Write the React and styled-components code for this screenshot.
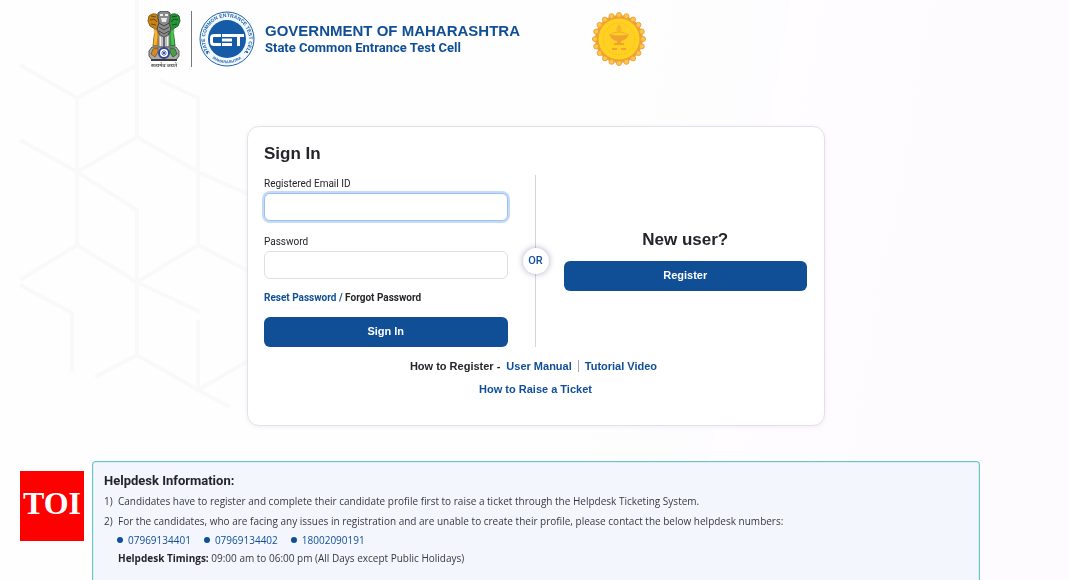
import React from "react";
import styled, { createGlobalStyle } from "styled-components";

const blue = "#104e96";
const ink = "#24252a";
const narrow = `Roboto, "Liberation Sans", sans-serif`;
const wide = `"Liberation Sans", Arial, sans-serif`;
const reading = `"Open Sans", "Liberation Sans", sans-serif`;

const GlobalStyle = createGlobalStyle`
  *, *::before, *::after { box-sizing: border-box; }
  body {
    margin: 0;
    background: #fefefe;
    color: ${ink};
    font-family: ${narrow};
    font-size: 11px;
    line-height: 16px;
  }
`;

const Page = styled.div`
  display: flex;
  flex-direction: column;
  align-items: center;
  min-height: 100vh;
  padding-left: 3px;
  background: linear-gradient(100deg, transparent 55%, #fefbff 80%);
`;

const Backdrop = styled.svg`
  position: fixed;
  inset: 0;
  z-index: -1;
  width: 100%;
  height: 100%;
`;

const Header = styled.header`
  display: flex;
  align-items: center;
  width: 100%;
  max-width: 888px;
  padding: 11px 54px 0;
`;

const EmblemBox = styled.div`
  display: flex;
  height: 56px;
  padding-right: 9px;
  border-right: 1px solid #77777c;
`;

const CetBox = styled.div`
  display: flex;
  margin: 0 10px 0 7px;
`;

const Titles = styled.div`
  color: ${blue};
  font-weight: bold;
`;

const Department = styled.h1`
  margin: 0;
  font-family: ${wide};
  font-size: 15px;
  line-height: 18px;
`;

const Cell = styled.p`
  margin: 0;
  font-size: 13px;
  line-height: 16px;
`;

const SealBox = styled.div`
  display: flex;
  margin-left: 72px;
`;

const Card = styled.main`
  width: calc(100% - 32px);
  max-width: 578px;
  margin: 59px 0 35px;
  padding: 17px 17px 28px 16px;
  border: 1px solid #e5dfea;
  border-radius: 12px;
  background: #fff;
  box-shadow: 0 1px 4px rgba(80, 50, 110, 0.08);
`;

const Heading = styled.h2`
  margin: 0;
  font-family: ${wide};
  font-size: 17px;
  line-height: 20px;
`;

const Columns = styled.div`
  display: grid;
  grid-template-columns: 1fr 56px 1fr;
  margin: 11px 0;
`;

const Form = styled.form`
  display: flex;
  flex-direction: column;
  gap: 12px;
`;

const Field = styled.div`
  display: flex;
  flex-direction: column;
`;

const Label = styled.label`
  font-size: 10px;
  line-height: 18px;
`;

const Input = styled.input`
  width: 100%;
  height: 28px;
  padding: 4px 8px;
  border: 1px solid #dedfe3;
  border-radius: 6px;
  background: #fff;
  font: inherit;
  outline: none;

  &:focus {
    border-color: #9dc0f0;
    box-shadow: 0 0 0 2px #c3daf9;
  }
`;

const Recovery = styled.p`
  margin: 0;
  color: ${blue};
  font-size: 10px;
  font-weight: bold;
  line-height: 14px;
`;

const Link = styled.a`
  color: ${(p) => (p.$dark ? ink : blue)};
  text-decoration: none;
`;

const Button = styled.button`
  width: 100%;
  height: 30px;
  padding: 0 0 2px;
  border: 0;
  border-radius: 6px;
  background: ${blue};
  color: #fff;
  font: bold 11px/16px ${wide};
  cursor: pointer;
`;

const Divider = styled.div`
  display: grid;
  place-items: center;
  background: linear-gradient(#d4d4db, #d4d4db) center / 1px 100% no-repeat;
`;

const Or = styled.span`
  display: grid;
  place-items: center;
  width: 26px;
  height: 26px;
  border-radius: 50%;
  background: #fff;
  box-shadow: 0 0 6px rgba(40, 50, 110, 0.4);
  color: ${blue};
  font-size: 11px;
  font-weight: 500;
`;

const NewUser = styled.section`
  display: flex;
  flex-direction: column;
  justify-content: center;
  align-items: center;
  gap: 11px;
  padding-bottom: 1px;
`;

const Guides = styled.nav`
  display: flex;
  flex-direction: column;
  align-items: center;
  gap: 7px;
  font-family: ${wide};
  font-weight: bold;
`;

const GuideRow = styled.div`
  display: flex;
  align-items: center;
  gap: 6px;
  padding-right: 4px;
`;

const Bar = styled.span`
  width: 1px;
  height: 12px;
  background: #a8a8b0;
`;

const Helpdesk = styled.section`
  flex: 1;
  width: calc(100% - 178px);
  max-width: 888px;
  padding: 9px 11px 14px;
  border: 1px solid #6fc3c4;
  border-bottom: 0;
  border-radius: 4px 4px 0 0;
  background: #f4f6fe;
  box-shadow: inset 0 0 0 1px #d9eef3;
  color: #38393e;
  font-family: ${reading};
  font-size: 10px;
`;

const HelpTitle = styled.h3`
  margin: 0;
  color: ${ink};
  font-family: ${narrow};
  font-size: 13px;
  line-height: 20px;
`;

const Notes = styled.ol`
  margin: 0;
  padding: 0;
  list-style: none;
  counter-reset: note;
  line-height: 20px;
`;

const Note = styled.li`
  display: flex;
  counter-increment: note;

  &::before {
    content: counter(note) ")";
    flex: 0 0 14px;
  }
`;

const Phones = styled.ul`
  display: flex;
  gap: 13px;
  margin: 0;
  padding: 0 0 0 13px;
  list-style: none;
  line-height: 18px;
`;

const Phone = styled.li`
  display: flex;
  align-items: center;
  gap: 5px;

  &::before {
    content: "";
    width: 6px;
    height: 6px;
    border-radius: 50%;
    background: ${blue};
  }
`;

const Timings = styled.p`
  margin: 0;
  padding-left: 14px;
  line-height: 18px;

  b { color: ${ink}; }
`;

const Toi = styled.div`
  position: fixed;
  left: 20px;
  bottom: 39px;
  display: flex;
  justify-content: center;
  width: 64px;
  height: 70px;
  background: #fe0000;
  color: #fff;
  font: bold 32px/64px "Liberation Serif", "Times New Roman", serif;
`;

const hexPaths = [
  "M20 65 77 98 137 65 M77 98V245 M137 0V137L77 172 M20 140 77 172 137 210V355",
  "M137 137 198 172 250 195 M160 80 198 98V245 M20 280 77 245 137 282 200 312",
  "M137 282 198 245 250 272 M20 285 72 313V372 M95 377 137 355 198 390 230 407",
  "M198 320V390L250 360 M990 37 1050 5",
];

function Hexagons() {
  return (
    <Backdrop aria-hidden="true">
      <g fill="none" stroke="#f9f9fa" strokeWidth="4">
        {hexPaths.map((d) => <path key={d} d={d} />)}
      </g>
    </Backdrop>
  );
}

function Emblem() {
  return (
    <svg width="36" height="56" viewBox="0 0 36 56" role="img" aria-label="Emblem of India">
      <path d="M3 5C6 2 11 2 13 6L14 16 13 35H7L9 18 4 15 2 10Z" fill="#c98212" stroke="#8a6118" />
      <path d="M33 5C30 2 25 2 23 6L22 16 23 35H29L27 18 32 15 34 10Z" fill="#249638" stroke="#1c6a2b" />
      <path d="M4 9 8 8 11 11M5 13 10 14M5 5 10 6" stroke="#6b4d17" fill="none" />
      <path d="M32 9 28 8 25 11M31 13 26 14M31 5 26 6" stroke="#164c20" fill="none" />
      <path d="M12 2 15 0H21L24 2 24 8 23 12 25 18 22 24 18 26 14 24 11 18 13 12 12 8Z" fill="#8b8b8b" stroke="#444" />
      <path d="M14 3H17V5H14ZM19 3H22V5H19ZM15 7H21L20 11H16Z" fill="#ececec" />
      <path d="M13 12 18 15 23 12M13 16 18 19 23 16M13 20 18 23 23 20" stroke="#444" fill="none" />
      <path d="M13 24 16 26V36H13ZM23 24 20 26V36H23Z" fill="#eee" stroke="#888" />
      <path d="M17 26H19V36H17Z" fill="#666" />
      <path d="M9 19 10 24 9 34" fill="none" stroke="#f3b43b" strokeWidth="3" />
      <path d="M27 19 26 24 27 34" fill="none" stroke="#51bd4d" strokeWidth="3" />
      <path d="M6 36H30L33 40V45L30 49H6L3 45V40Z" fill="#aaa" stroke="#555" />
      <path d="M7 38 12 37 12 41 9 46 5 43Z" fill="#d58b23" stroke="#7d642d" />
      <path d="M29 38 24 37 24 41 27 46 31 43Z" fill="#4e9a4d" stroke="#2c6f2d" />
      <path d="M5 49H31" stroke="#3d3d3d" strokeWidth="2" />
      <circle cx="18" cy="42" r="5" fill="#fff" stroke="#35439a" strokeWidth="2" />
      <path d="M18 39V45M15 42H21M16 40 20 44M20 40 16 44" stroke="#6974b4" />
      <circle cx="18" cy="42" r="1" fill="#35439a" />
      <text x="18" y="56" textAnchor="middle" fontSize="5" fontWeight="bold" fontFamily="Noto Sans, sans-serif" fill="#555">सत्यमेव जयते</text>
    </svg>
  );
}

function CetLogo() {
  return (
    <svg width="56" height="56" viewBox="0 0 56 56" role="img" aria-label="CET Cell">
      <defs>
        <path id="ringTop" d="M12.4 43.6A22 22 0 1 1 43.6 43.6" />
        <path id="ringBottom" d="M9 43A24 24 0 0 0 47 43" />
      </defs>
      <circle cx="28" cy="28" r="27" fill="#f3faff" stroke="#1f61a5" />
      <circle cx="28" cy="28" r="19" fill="#155ba7" />
      <g fill="#1c5fa5" fontFamily="Liberation Sans, sans-serif" fontWeight="bold">
        <text fontSize="5"><textPath href="#ringTop" startOffset="50%" textAnchor="middle">STATE COMMON ENTRANCE TEST CELL</textPath></text>
        <text fontSize="4"><textPath href="#ringBottom" startOffset="50%" textAnchor="middle">MAHARASHTRA</textPath></text>
      </g>
      <circle cx="8" cy="41" r="1" fill="#1c5fa5" />
      <circle cx="48" cy="41" r="1" fill="#1c5fa5" />
      <g fill="none" stroke="#fff" strokeWidth="3">
        <path d="M22 24.500H15Q12.500 24.500 12.500 27V31Q12.500 33.500 15 33.500H22" />
        <path d="M23 24.500H45M23 29H33M23 33.500H33M39.500 24V35" />
      </g>
    </svg>
  );
}

function Seal() {
  const petals = Array.from({ length: 20 }, (_, i) => {
    const a = (i * Math.PI) / 10;
    return { x: 27 + 24 * Math.sin(a), y: 27 - 24 * Math.cos(a) };
  });
  return (
    <svg width="54" height="54" viewBox="0 0 54 54" role="img" aria-label="Seal of Maharashtra">
      <circle cx="27" cy="27" r="24" fill="#f4a12c" />
      {petals.map((p) => (
        <circle key={`${p.x},${p.y}`} cx={p.x} cy={p.y} r="2.500" fill="#fbc845" stroke="#eda044" />
      ))}
      <circle cx="27" cy="27" r="21" fill="#ffd21f" stroke="#eba436" />
      <circle cx="27" cy="27" r="16" fill="#ffcf22" stroke="#f9c02b" strokeDasharray="2 1" />
      <g fill="#f0a32e">
        <path d="M27 12C23 17 24 20 27 20C30 20 31 17 27 12Z" opacity=".5" />
        <path d="M17 22Q27 25 37 22Q34 29 29 29V31H32V33H22V31H25V29Q20 29 17 22Z" />
        <path d="M20 36H25V38H20ZM29 36H34V38H29Z" />
      </g>
      <path d="M19 22Q27 18 35 22" fill="none" stroke="#f2ad32" />
    </svg>
  );
}

export default function App() {
  return (
    <>
      <GlobalStyle />
      <Hexagons />
      <Page>
        <Header>
          <EmblemBox><Emblem /></EmblemBox>
          <CetBox><CetLogo /></CetBox>
          <Titles>
            <Department>GOVERNMENT OF MAHARASHTRA</Department>
            <Cell>State Common Entrance Test Cell</Cell>
          </Titles>
          <SealBox><Seal /></SealBox>
        </Header>

        <Card>
          <Heading>Sign In</Heading>
          <Columns>
            <Form onSubmit={(e) => e.preventDefault()}>
              <Field>
                <Label htmlFor="email">Registered Email ID</Label>
                <Input id="email" type="email" autoFocus />
              </Field>
              <Field>
                <Label htmlFor="password">Password</Label>
                <Input id="password" type="password" />
              </Field>
              <Recovery>
                <Link href="#reset">Reset Password</Link> / <Link href="#forgot" $dark>Forgot Password</Link>
              </Recovery>
              <Button type="submit">Sign In</Button>
            </Form>
            <Divider><Or>OR</Or></Divider>
            <NewUser>
              <Heading>New user?</Heading>
              <Button type="button">Register</Button>
            </NewUser>
          </Columns>
          <Guides>
            <GuideRow>
              <span>How to Register -</span>
              <Link href="#manual">User Manual</Link>
              <Bar />
              <Link href="#video">Tutorial Video</Link>
            </GuideRow>
            <Link href="#ticket">How to Raise a Ticket</Link>
          </Guides>
        </Card>

        <Helpdesk>
          <HelpTitle>Helpdesk Information:</HelpTitle>
          <Notes>
            <Note>Candidates have to register and complete their candidate profile first to raise a ticket through the Helpdesk Ticketing System.</Note>
            <Note>For the candidates, who are facing any issues in registration and are unable to create their profile, please contact the below helpdesk numbers:</Note>
          </Notes>
          <Phones>
            {["07969134401", "07969134402", "18002090191"].map((n) => (
              <Phone key={n}><Link href={`tel:${n}`}>{n}</Link></Phone>
            ))}
          </Phones>
          <Timings><b>Helpdesk Timings:</b> 09:00 am to 06:00 pm (All Days except Public Holidays)</Timings>
        </Helpdesk>
      </Page>
      <Toi>TOI</Toi>
    </>
  );
}
